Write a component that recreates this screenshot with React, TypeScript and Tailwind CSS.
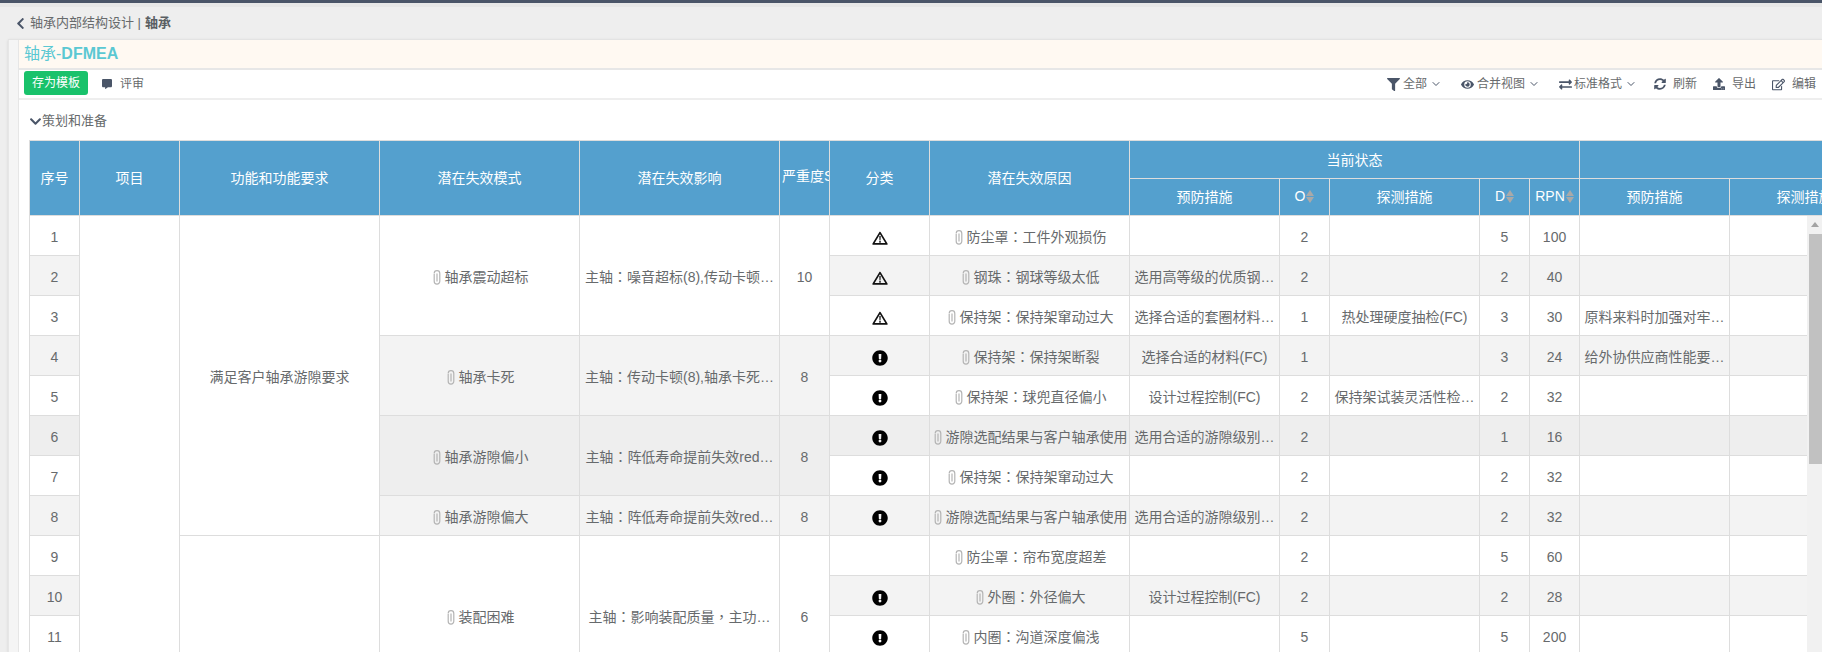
import React from "react";
import { FaFilter, FaEye, FaExchangeAlt, FaSyncAlt, FaUpload, FaRegEdit, FaCommentAlt, FaExclamationCircle, FaChevronDown, FaChevronLeft } from "react-icons/fa";
import { LuChevronDown } from "react-icons/lu";

const Clip = () => (
  <svg width="8" height="15" viewBox="0 0 8 15" className="ml-[2px] mr-[4px] inline-block align-[-3px]" fill="none" stroke="#b4b4b4" strokeWidth="1.2">
    <path d="M1.2 4v7.3a2.8 2.8 0 0 0 5.6 0V3.5a2.8 2.8 0 0 0-5.6 0" />
    <path d="M4 3.5v8" />
  </svg>
);

const Warn = () => (
  <svg width="16" height="14" viewBox="0 0 16 14" className="inline-block">
    <path d="M8 1.6 1.2 12.9h13.6z" fill="none" stroke="#111" strokeWidth="1.7" strokeLinejoin="round" />
    <path d="M7 5h2l-.3 4.4H7.3zM7 10h2v1.7H7z" fill="#555" />
  </svg>
);

const Err = () => <FaExclamationCircle className="inline-block text-base text-black" />;

const Sort = () => (
  <span className="ml-[1px] inline-flex flex-col items-center gap-[1px]">
    <span className="h-0 w-0 border-x-[4px] border-b-[6px] border-x-transparent border-b-[#a9a9a9]" />
    <span className="h-0 w-0 border-x-[4px] border-t-[6px] border-x-transparent border-t-[#a9a9a9]" />
  </span>
);

const SortHead = ({ label }: { label: string }) => (
  <span className="relative -top-[1px] inline-flex items-center justify-center">
    {label}
    <Sort />
  </span>
);

// Full-width punctuation sits centred in its box in the reference.
const T = ({ s }: { s: string }) => (
  <>
    {s.split(/([：，])/).map((part, i) =>
      part === "：" || part === "，" ? (
        <span key={i} className="[font-family:'Noto_Sans_CJK_TC',sans-serif]">{part}</span>
      ) : (
        part
      )
    )}
  </>
);

type Row = {
  bg: string;
  n: number;
  cls: "w" | "e" | "";
  cause: string;
  prev: string;
  o: string;
  det: string;
  d: string;
  rpn: string;
  prev2: string;
};

const W = "bg-white";
const G = "bg-[#f3f3f3]";
const H = "bg-[#eeeeee]";

const rows: Row[] = [
  { bg: W, n: 1, cls: "w", cause: "防尘罩：工件外观损伤", prev: "", o: "2", det: "", d: "5", rpn: "100", prev2: "" },
  { bg: G, n: 2, cls: "w", cause: "钢珠：钢球等级太低", prev: "选用高等级的优质钢…", o: "2", det: "", d: "2", rpn: "40", prev2: "" },
  { bg: W, n: 3, cls: "w", cause: "保持架：保持架窜动过大", prev: "选择合适的套圈材料…", o: "1", det: "热处理硬度抽检(FC)", d: "3", rpn: "30", prev2: "原料来料时加强对牢…" },
  { bg: G, n: 4, cls: "e", cause: "保持架：保持架断裂", prev: "选择合适的材料(FC)", o: "1", det: "", d: "3", rpn: "24", prev2: "给外协供应商性能要…" },
  { bg: W, n: 5, cls: "e", cause: "保持架：球兜直径偏小", prev: "设计过程控制(FC)", o: "2", det: "保持架试装灵活性检…", d: "2", rpn: "32", prev2: "" },
  { bg: H, n: 6, cls: "e", cause: "游隙选配结果与客户轴承使用", prev: "选用合适的游隙级别…", o: "2", det: "", d: "1", rpn: "16", prev2: "" },
  { bg: W, n: 7, cls: "e", cause: "保持架：保持架窜动过大", prev: "", o: "2", det: "", d: "2", rpn: "32", prev2: "" },
  { bg: G, n: 8, cls: "e", cause: "游隙选配结果与客户轴承使用", prev: "选用合适的游隙级别…", o: "2", det: "", d: "2", rpn: "32", prev2: "" },
  { bg: W, n: 9, cls: "", cause: "防尘罩：帘布宽度超差", prev: "", o: "2", det: "", d: "5", rpn: "60", prev2: "" },
  { bg: G, n: 10, cls: "e", cause: "外圈：外径偏大", prev: "设计过程控制(FC)", o: "2", det: "", d: "2", rpn: "28", prev2: "" },
  { bg: W, n: 11, cls: "e", cause: "内圈：沟道深度偏浅", prev: "", o: "5", det: "", d: "5", rpn: "200", prev2: "" },
];

const groups: Record<number, { span: number; bg: string; mode: string; effect: string; s: string }> = {
  1: { span: 3, bg: W, mode: "轴承震动超标", effect: "主轴：噪音超标(8),传动卡顿…", s: "10" },
  4: { span: 2, bg: G, mode: "轴承卡死", effect: "主轴：传动卡顿(8),轴承卡死…", s: "8" },
  6: { span: 2, bg: H, mode: "轴承游隙偏小", effect: "主轴：阵低寿命提前失效red…", s: "8" },
  8: { span: 1, bg: G, mode: "轴承游隙偏大", effect: "主轴：阵低寿命提前失效red…", s: "8" },
  9: { span: 4, bg: W, mode: "装配困难", effect: "主轴：影响装配质量，主功…", s: "6" },
};

const td = "h-10 whitespace-nowrap border border-[#dddddd] px-1 pt-[2px] text-center";
const th = "overflow-hidden whitespace-nowrap border border-[#dddddd] px-0 text-center font-normal text-white";

const Tool = ({ icon, label, caret, gap, ml }: { icon: React.ReactNode; label: string; caret?: boolean; gap: string; ml: string }) => (
  <span className={`flex items-center pt-[2px] text-xs text-[#676a6c] ${ml}`}>
    <span className={`flex items-center text-[13px] text-[#4a5568] ${gap}`}>{icon}</span>
    {label}
    {caret && <LuChevronDown className="ml-[3px] text-xs text-[#4a5568]" />}
  </span>
);

export default function App() {
  return (
    <div className="relative h-[652px] w-full overflow-hidden bg-[#eeeeee] text-sm text-[#676a6c] [font-family:'Liberation_Sans','Noto_Sans_CJK_SC',sans-serif]">
      <div className="h-[3px] bg-[#4a5568]" />
      <div className="h-[4px] bg-[#e7e7e7]" />
      <div className="flex h-[32px] items-center pl-[14px] text-[13px]">
        <FaChevronLeft className="mr-[3px] text-[13px] text-[#4a5568]" />
        <span>轴承内部结构设计 | </span>
        <span className="ml-1 font-bold text-[#5a5f63]">轴承</span>
      </div>
      <div className="ml-2 flex h-[613px] border-t border-[#e3e3e3] shadow-sm">
        <div className="w-[11px] shrink-0 border-x border-[#e6e6e6] bg-[#f5f5f5]" />
        <div className="min-w-0 flex-1 bg-white">
          <div className="flex h-[30px] items-center border-b-2 border-[#e7e7e7] bg-[#fff9f2] pl-[5px] text-base text-[#5bc8d3]">
            轴承-<b>DFMEA</b>
          </div>
          <div className="flex h-[30px] items-center border-b-2 border-[#eeeeee] pb-[2px] pl-[5px] pr-[6px]">
            <span className="flex h-6 w-16 items-center justify-center rounded-[3px] bg-[#19c26b] text-xs text-white">存为模板</span>
            <span className="ml-[14px] flex items-center pt-[2px] text-xs">
              <FaCommentAlt className="mr-2 text-[10px] text-[#4a5568]" />
              评审
            </span>
            <div className="ml-auto flex items-center">
              <Tool icon={<FaFilter />} label="全部" caret gap="mr-[3px]" ml="" />
              <Tool icon={<FaEye />} label="合并视图" caret gap="mr-[3px]" ml="ml-[19px]" />
              <Tool icon={<FaExchangeAlt />} label="标准格式" caret gap="mr-[2px]" ml="ml-[19px]" />
              <Tool icon={<FaSyncAlt className="text-xs" />} label="刷新" gap="mr-[7px]" ml="ml-[17px]" />
              <Tool icon={<FaUpload className="text-xs" />} label="导出" gap="mr-[7px]" ml="ml-4" />
              <Tool icon={<FaRegEdit />} label="编辑" gap="mr-[7px]" ml="ml-4" />
            </div>
          </div>
          <div className="flex h-[40px] items-center pl-[10px] pt-[3px] text-[13px]">
            <FaChevronDown className="text-[13px] text-[#4a5568]" />
            策划和准备
          </div>
          <div className="ml-[10px] overflow-hidden">
            <table className="w-[1850px] table-fixed border-collapse">
              <colgroup>
                {[50, 100, 200, 200, 200, 50, 100, 200, 150, 50, 150, 50, 50, 150, 150, 150].map((w, i) => (
                  <col key={i} style={{ width: w }} />
                ))}
              </colgroup>
              <thead className="bg-[#54a0ce]">
                <tr className="h-[38px]">
                  <th rowSpan={2} className={th}>序号</th>
                  <th rowSpan={2} className={th}>项目</th>
                  <th rowSpan={2} className={th}>功能和功能要求</th>
                  <th rowSpan={2} className={th}>潜在失效模式</th>
                  <th rowSpan={2} className={th}>潜在失效影响</th>
                  <th rowSpan={2} className={`${th} pb-1 pl-[2px] text-left`}>严重度S</th>
                  <th rowSpan={2} className={th}>分类</th>
                  <th rowSpan={2} className={th}>潜在失效原因</th>
                  <th colSpan={5} className={th}>当前状态</th>
                  <th colSpan={3} className={th}></th>
                </tr>
                <tr className="h-[37px]">
                  <th className={th}>预防措施</th>
                  <th className={th}><SortHead label="O" /></th>
                  <th className={th}>探测措施</th>
                  <th className={th}><SortHead label="D" /></th>
                  <th className={th}><SortHead label="RPN" /></th>
                  <th className={th}>预防措施</th>
                  <th className={th}>探测措施</th>
                  <th className={th}></th>
                </tr>
              </thead>
              <tbody>
                {rows.map((r) => {
                  const g = groups[r.n];
                  return (
                    <tr key={r.n} className={r.bg}>
                      <td className={td}>{r.n}</td>
                      {r.n === 1 && <td rowSpan={12} className={`${td} bg-white`} />}
                      {r.n === 1 && <td rowSpan={8} className={`${td} bg-white`}>满足客户轴承游隙要求</td>}
                      {r.n === 9 && <td rowSpan={4} className={`${td} bg-white`} />}
                      {g && (
                        <>
                          <td rowSpan={g.span} className={`${td} ${g.bg}`}><Clip />{g.mode}</td>
                          <td rowSpan={g.span} className={`${td} ${g.bg}`}><T s={g.effect} /></td>
                          <td rowSpan={g.span} className={`${td} ${g.bg}`}>{g.s}</td>
                        </>
                      )}
                      <td className={td}>{r.cls === "w" ? <Warn /> : r.cls === "e" ? <Err /> : null}</td>
                      <td className={`${td} !px-0`}><Clip /><T s={r.cause} /></td>
                      <td className={td}>{r.prev}</td>
                      <td className={td}>{r.o}</td>
                      <td className={td}>{r.det}</td>
                      <td className={td}>{r.d}</td>
                      <td className={td}>{r.rpn}</td>
                      <td className={td}>{r.prev2}</td>
                      <td className={td}></td>
                      <td className={td}></td>
                    </tr>
                  );
                })}
                <tr className={H}>
                  {Array.from({ length: 11 }).map((_, i) => (
                    <td key={i} className={td}></td>
                  ))}
                </tr>
              </tbody>
            </table>
          </div>
        </div>
      </div>
      <div className="absolute bottom-0 right-0 top-[216px] w-[15px] bg-[#f1f1f1]">
        <div className="mx-auto mt-[6px] h-0 w-0 border-x-[4px] border-b-[5px] border-x-transparent border-b-[#a3a3a3]" />
        <div className="absolute left-[2px] right-0 top-[18px] h-[230px] bg-[#c1c1c1]" />
      </div>
    </div>
  );
}
